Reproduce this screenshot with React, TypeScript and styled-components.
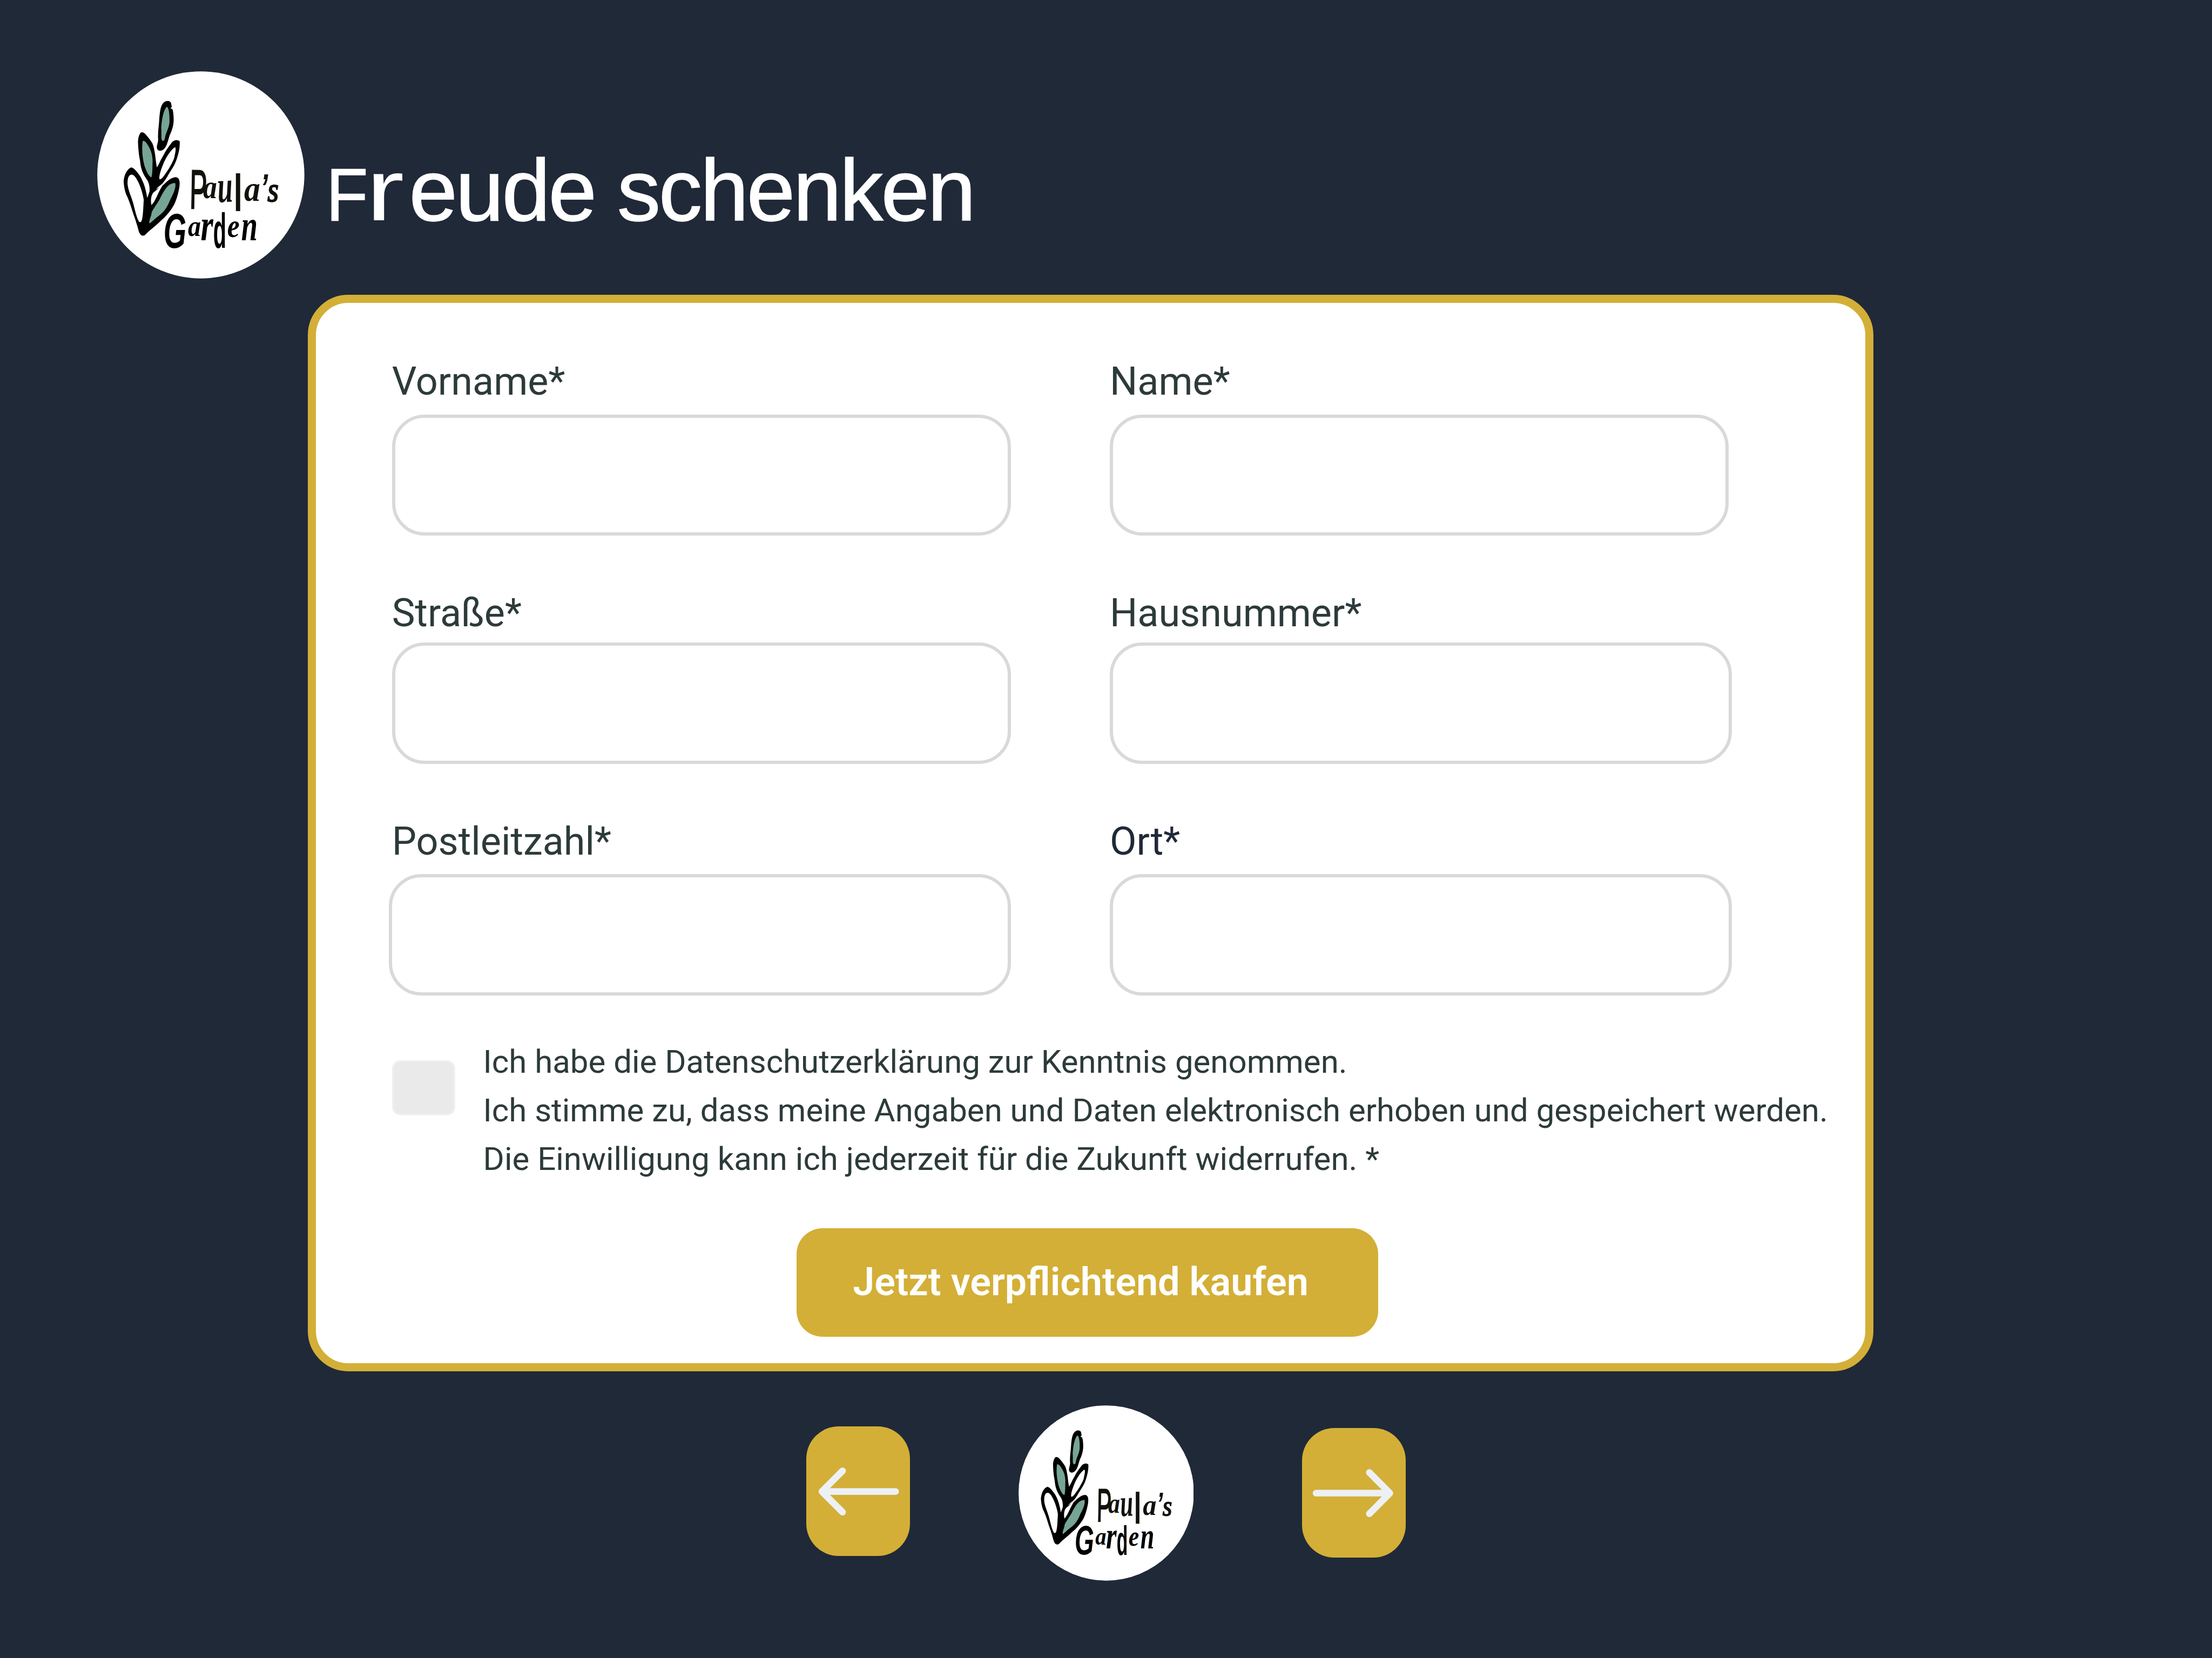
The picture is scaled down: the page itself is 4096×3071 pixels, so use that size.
import React from "react";
import styled, { createGlobalStyle } from "styled-components";

const SCALE = 4096 / 4098;
const u = (n: number) => `${(n * SCALE).toFixed(3)}px`;

const color = {
  night: "#202938",
  gold: "#d3af37",
  ink: "#2d3a3a",
  line: "#d9d9d9",
  mist: "#edf1f5",
  box: "#eaeaea",
  leaf: "#76a595",
};

const GlobalStyle = createGlobalStyle`
  html, body { margin: 0; padding: 0; background: ${color.night}; }
  *, *::before, *::after { box-sizing: border-box; }
`;

const Page = styled.div`
  width: 4096px;
  height: 3071px;
  overflow: hidden;
  padding-top: ${u(132)};
  background: ${color.night};
  font-family: Roboto, "Liberation Sans", sans-serif;
  display: flex;
  flex-direction: column;
`;

const Header = styled.header`
  display: flex;
  align-items: flex-start;
  height: ${u(384)};
  padding-left: ${u(180)};
`;

const Title = styled.h1`
  margin: ${u(126)} 0 0 ${u(39)};
  height: ${u(190)};
  line-height: ${u(190)};
  font-family: "Liberation Sans", Arial, sans-serif;
  font-size: ${u(161)};
  font-weight: 400;
  letter-spacing: ${u(-3.5)};
  -webkit-text-stroke: 1.5px #fff;
  white-space: nowrap;
  color: #fff;
`;

const Initial = styled.span`
  display: inline-block;
  width: ${u(76)};
  font-size: ${u(138)};
  transform: scaleX(0.92);
  transform-origin: 11px 50%;
`;

const WideLetter = styled.span`
  display: inline-block;
  width: ${u(79)};
  transform: scaleX(1.32);
  transform-origin: 4px 50%;
  -webkit-text-stroke: 0;
`;

const Card = styled.main`
  width: ${u(2901)};
  height: ${u(1995)};
  margin: ${u(30)} 0 0 ${u(570)};
  padding: ${u(104.4)} 0 0 ${u(141)};
  border: 15px solid ${color.gold};
  border-radius: ${u(75)};
  background: #fff;
`;

const Rows = styled.div`
  display: flex;
  flex-direction: column;
  gap: ${u(101.4)};
`;

const Row = styled.div`
  display: grid;
  grid-template-columns: ${u(1147)} ${u(1153)};
  column-gap: ${u(183)};
`;

const Field = styled.label<{ $gap: number }>`
  display: flex;
  flex-direction: column;
  gap: ${(p) => u(p.$gap)};
`;

const Caption = styled.span<{ $dark?: boolean }>`
  height: ${u(84)};
  line-height: ${u(84)};
  font-size: ${u(72)};
  white-space: nowrap;
  color: ${(p) => (p.$dark ? color.night : color.ink)};
`;

const Input = styled.input<{ $bleed?: number; $width: number }>`
  width: ${(p) => u(p.$width)};
  height: ${u(225)};
  margin: 0 0 0 ${(p) => u(-(p.$bleed ?? 0))};
  padding: 0 ${u(48)};
  border: 6px solid ${color.line};
  border-radius: ${u(60)};
  background: #fff;
  outline: none;
  font: inherit;
  font-size: ${u(72)};
`;

const Consent = styled.label`
  display: flex;
  align-items: flex-start;
  gap: ${u(52)};
  margin-top: ${u(78.2)};
`;

const Checkbox = styled.input`
  appearance: none;
  flex: none;
  width: ${u(117)};
  height: ${u(102)};
  margin: ${u(41.5)} 0 0;
  border: 3px solid ${color.mist};
  border-radius: ${u(15)};
  background: ${color.box};
`;

const ConsentText = styled.span`
  font-size: ${u(60)};
  line-height: ${u(90)};
  white-space: pre;
  color: ${color.ink};
`;

const Submit = styled.button`
  display: block;
  width: ${u(1077)};
  height: ${u(201)};
  margin: ${u(83.5)} 0 0 ${u(750)};
  padding: 0 0 ${u(3)} ${u(104)};
  border: 0;
  border-radius: ${u(48)};
  background: ${color.gold};
  color: #fff;
  font-family: inherit;
  font-size: ${u(72)};
  font-weight: 600;
  text-align: left;
  white-space: nowrap;
`;

const Nav = styled.nav`
  display: flex;
  align-items: flex-start;
  margin: ${u(63)} 0 0 ${u(1494)};
`;

const NavButton = styled.button<{ $drop: number }>`
  width: ${u(192)};
  height: ${u(240)};
  margin: ${(p) => u(p.$drop)} 0 0;
  padding: 0;
  border: 0;
  border-radius: ${u(60)};
  background: ${color.gold};
`;

const NavLogo = styled.div`
  margin: 0 ${u(200.5)};
`;

const ArrowSvg = styled.svg`
  display: block;
  width: 100%;
  height: 100%;
  fill: none;
  stroke: ${color.mist};
  stroke-width: 12.4;
  stroke-linecap: round;
  stroke-linejoin: round;
`;

const LogoSvg = styled.svg<{ $size: number }>`
  display: block;
  flex: none;
  width: ${(p) => u(p.$size)};
  height: ${(p) => u(p.$size)};
`;

const Letter = styled.text<{ $sans?: boolean; $upright?: boolean; $light?: boolean }>`
  font-family: ${(p) => (p.$sans ? '"Liberation Sans", sans-serif' : '"Liberation Serif", serif')};
  font-style: ${(p) => (p.$upright ? "normal" : "italic")};
  font-weight: ${(p) => (p.$light ? 400 : 700)};
`;

type Glyph = {
  ch: string;
  x: number;
  y: number;
  size: number;
  squeeze: number;
  tilt?: number;
  sans?: boolean;
  upright?: boolean;
  light?: boolean;
};

const paulas: Glyph[] = [
  { ch: "P", x: 572, y: 828, size: 308, squeeze: 0.47, sans: true, upright: true, light: true, tilt: 1 },
  { ch: "a", x: 648, y: 770, size: 185, squeeze: 0.84 },
  { ch: "u", x: 731, y: 794, size: 255, squeeze: 0.6, tilt: -3 },
  { ch: "l", x: 818, y: 842, size: 290, squeeze: 0.6, sans: true, upright: true },
  { ch: "a", x: 876, y: 785, size: 195, squeeze: 0.92 },
  { ch: "’", x: 966, y: 786, size: 210, squeeze: 0.72, sans: true },
  { ch: "s", x: 1006, y: 788, size: 190, squeeze: 0.84, light: true },
];

const garden: Glyph[] = [
  { ch: "G", x: 428, y: 1046, size: 272, squeeze: 0.6, sans: true },
  { ch: "a", x: 564, y: 982, size: 168, squeeze: 0.86 },
  { ch: "r", x: 634, y: 1006, size: 250, squeeze: 0.72 },
  { ch: "d", x: 704, y: 1048, size: 272, squeeze: 0.44, sans: true, upright: true },
  { ch: "e", x: 782, y: 988, size: 185, squeeze: 0.84 },
  { ch: "n", x: 860, y: 1006, size: 240, squeeze: 0.68 },
];

function Lettering({ glyphs, fill }: { glyphs: Glyph[]; fill: string }) {
  return (
    <g fill={fill}>
      {glyphs.map((g, i) => (
        <Letter
          key={i}
          $sans={g.sans}
          $upright={g.upright}
          $light={g.light}
          fontSize={g.size}
          stroke={g.light ? fill : "none"}
          strokeWidth={g.light ? 7 : 0}
          transform={`translate(${g.x} ${g.y}) rotate(${g.tilt ?? 0}) scale(${g.squeeze} 1)`}
        >
          {g.ch}
        </Letter>
      ))}
    </g>
  );
}

function Logo({ size }: { size: number }) {
  return (
    <LogoSvg $size={size} viewBox="59 65 1153 1153" role="img" aria-label="Paula's Garden">
      <circle cx="635.5" cy="641.5" r="576" fill="#fff" />
      <g fill="#000">
        <path d="M440 232C455 228 466 231 470 242L474 264L466 270L478 277C483 295 485 320 484 345C482 375 472 400 462 422C450 460 445 490 425 502C410 512 394 508 391 492C390 475 397 465 398 445C395 410 402 370 404 335C408 290 410 245 440 232Z" />
        <path d="M302 406C315 401 325 411 333 422C350 440 358 455 366 466C378 495 383 540 386 570L391 600C405 580 412 555 426 535C440 505 460 480 475 460C488 447 505 443 518 455C520 490 512 520 502 552C490 590 470 615 455 640C440 668 425 690 405 703L370 735L345 775L350 735C352 700 345 680 330 660C310 630 300 600 297 560C290 530 287 490 286 460C285 440 292 415 302 406Z" />
        <path d="M250 600C270 608 285 630 300 652C318 685 330 720 337 770L350 735C365 725 400 725 435 690C455 670 480 652 500 655C517 658 520 680 516 710C510 745 500 780 488 805C470 840 440 875 415 895C385 925 350 950 325 976C310 986 297 976 290 955C285 935 275 900 262 865C250 830 240 790 220 750C212 730 208 705 206 680C208 640 228 605 250 600Z" />
      </g>
      <g fill="#fff">
        <path d="M492 487C500 495 492 525 486 552C470 590 450 620 435 640C425 655 412 670 405 665C402 645 415 610 425 585C440 545 470 500 492 487Z" />
        <path d="M250 640C235 640 226 660 228 695C232 730 248 760 258 795C268 830 275 870 290 900C297 908 305 905 308 890C315 865 315 820 318 780C310 730 290 680 272 655C265 645 258 640 250 640Z" />
        <path d="M361 810C354 780 360 745 378 735C395 720 410 707 423 700C400 732 385 785 361 810Z" />
      </g>
      <g fill={color.leaf}>
        <path d="M446 262C458 270 462 300 461 350C458 380 445 400 438 425C435 445 432 455 422 452C412 445 418 420 415 380C418 340 425 285 446 262Z" />
        <path d="M312 453C325 450 335 465 346 485C360 510 365 530 367 560C366 600 367 635 361 655C345 650 335 625 325 600C312 560 305 500 312 453Z" />
        <path d="M492 687C500 700 488 740 465 780C450 820 430 850 400 870C380 885 362 905 350 912C345 895 360 875 362 850C370 830 395 800 410 770C430 730 455 685 492 687Z" />
      </g>
      <Lettering glyphs={paulas} fill="#11120c" />
      <Lettering glyphs={garden} fill="#000" />
    </LogoSvg>
  );
}

const rows = [
  { gap: 18.6, left: "Vorname*", right: "Name*", rightWidth: 1147, bleed: 0 },
  { gap: 12.6, left: "Straße*", right: "Hausnummer*", rightWidth: 1153, bleed: 0 },
  { gap: 18.6, left: "Postleitzahl*", right: "Ort*", rightWidth: 1153, bleed: 6, dark: true },
];

export default function App() {
  return (
    <>
      <GlobalStyle />
      <Page>
        <Header>
          <Logo size={384} />
          <Title>
            <Initial>F</Initial>
            <WideLetter>r</WideLetter>eude schenken
          </Title>
        </Header>
        <Card>
          <Rows>
            {rows.map((row) => (
              <Row key={row.left}>
                <Field $gap={row.gap}>
                  <Caption>{row.left}</Caption>
                  <Input $width={1147 + row.bleed} $bleed={row.bleed} />
                </Field>
                <Field $gap={row.gap}>
                  <Caption $dark={row.dark}>{row.right}</Caption>
                  <Input $width={row.rightWidth} />
                </Field>
              </Row>
            ))}
          </Rows>
          <Consent>
            <Checkbox type="checkbox" />
            <ConsentText>
              {"Ich habe die Datenschutzerklärung zur Kenntnis genommen.\nIch stimme zu, dass meine Angaben und Daten elektronisch erhoben und gespeichert werden.\nDie Einwilligung kann ich jederzeit für die Zukunft widerrufen. *"}
            </ConsentText>
          </Consent>
          <Submit type="button">Jetzt verpflichtend kaufen</Submit>
        </Card>
        <Nav>
          <NavButton $drop={39} aria-label="Zurück">
            <ArrowSvg viewBox="0 0 192 240">
              <path d="M165.5 120.7H29M67.2 82.4L29 120.7L67.2 159" />
            </ArrowSvg>
          </NavButton>
          <NavLogo>
            <Logo size={325} />
          </NavLogo>
          <NavButton $drop={42} aria-label="Weiter">
            <ArrowSvg viewBox="0 0 192 240">
              <path d="M26 120.7H162.7M124.7 82.4L162.7 120.7L124.7 159" />
            </ArrowSvg>
          </NavButton>
        </Nav>
      </Page>
    </>
  );
}
